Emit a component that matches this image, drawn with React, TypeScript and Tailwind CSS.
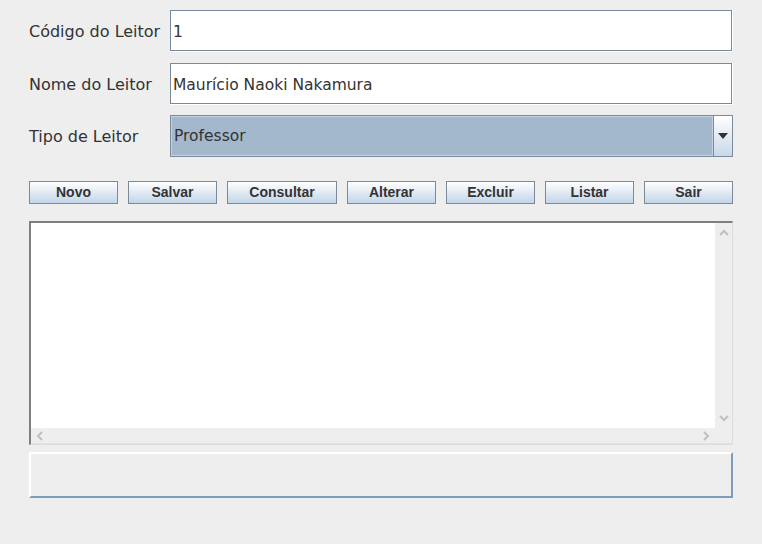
import React from 'react';

const labelFont = { fontFamily: '"DejaVu Sans", sans-serif' };

function Field({ label, value }: { label: string; value: string }) {
  return (
    <div className="flex items-center h-[42px]">
      <span className="w-[141px] text-[16px] text-[#333333] pt-[1px]">{label}</span>
      <div className="w-[563px] h-full border-r border-b border-white">
        <div className="h-full border border-[#7a8a99] bg-white flex items-center pl-[2px] pt-[4px] text-[15.5px] text-[#333333]">
          {value}
        </div>
      </div>
    </div>
  );
}

const buttons = [
  { text: 'Novo', w: 'w-[89px]' },
  { text: 'Salvar', w: 'w-[89px]' },
  { text: 'Consultar', w: 'w-[110px]' },
  { text: 'Alterar', w: 'w-[89px]' },
  { text: 'Excluir', w: 'w-[89px]' },
  { text: 'Listar', w: 'w-[89px]' },
  { text: 'Sair', w: 'w-[89px]' },
];

export default function App() {
  return (
    <div className="w-[762px] h-[544px] bg-[#eeeeee] pt-[10px] pl-[29px]" style={labelFont}>
      {/* form rows */}
      <div className="flex flex-col">
        <Field label="Código do Leitor" value="1" />
        <div className="mt-[11px]">
          <Field label="Nome do Leitor" value="Maurício Naoki Nakamura" />
        </div>
        <div className="flex items-center h-[42px] mt-[10px]">
          <span className="w-[141px] text-[16px] text-[#333333] pt-[1px]">Tipo de Leitor</span>
          <div className="w-[563px] h-full border border-[#7a8a99] flex">
            <div className="flex-1 bg-[#a3b8cc] border border-[#c4d2df] flex items-center pl-[2px] pt-[2px] text-[15.5px] text-[#333333]">
              Professor
            </div>
            <div className="w-[19px] border-l border-[#7a8a99] bg-gradient-to-b from-white to-[#c8d8e8] flex items-center justify-center">
              <svg width="10" height="6" viewBox="0 0 10 6">
                <path d="M0 0H10L5 6Z" fill="#333333" />
              </svg>
            </div>
          </div>
        </div>
      </div>

      {/* action buttons */}
      <div className="flex gap-[10px] mt-[24px]">
        {buttons.map((b) => (
          <div
            key={b.text}
            className={`${b.w} h-[23px] border border-[#7a8a99] bg-gradient-to-b from-white to-[#c3d5e8] flex items-center justify-center text-[14px] font-bold text-[#333333]`}
            style={{ fontFamily: '"Liberation Sans", Arial, sans-serif' }}
          >
            {b.text}
          </div>
        ))}
      </div>

      {/* scroll pane */}
      <div className="w-[704px] h-[224px] mt-[17px] border-t-2 border-l-2 border-[#7f7f7f] border-r border-b border-r-[#dcdcdc] border-b-[#dcdcdc] flex flex-col">
        <div className="flex flex-1">
          <div className="flex-1 bg-white" />
          <div className="w-[17px] bg-[#eeeeee] flex flex-col items-center justify-between py-[6px]">
            <svg width="10" height="7" viewBox="0 0 10 7">
              <path d="M1 6L5 2L9 6" stroke="#c0c0c0" strokeWidth="2" fill="none" />
            </svg>
            <svg width="10" height="7" viewBox="0 0 10 7">
              <path d="M1 1L5 5L9 1" stroke="#c0c0c0" strokeWidth="2" fill="none" />
            </svg>
          </div>
        </div>
        <div className="h-[16px] flex bg-[#eeeeee] border-b border-[#e2e2e2]">
          <div className="flex-1 flex items-center justify-between px-[5px]">
            <svg width="7" height="10" viewBox="0 0 7 10">
              <path d="M6 1L2 5L6 9" stroke="#c0c0c0" strokeWidth="2" fill="none" />
            </svg>
            <svg width="7" height="10" viewBox="0 0 7 10">
              <path d="M1 1L5 5L1 9" stroke="#c0c0c0" strokeWidth="2" fill="none" />
            </svg>
          </div>
          <div className="w-[17px]" />
        </div>
      </div>

      {/* status panel */}
      <div className="w-[704px] h-[46px] mt-[7px] border-t-2 border-l-2 border-white border-b-2 border-r-2 border-b-[#7c9cbc] border-r-[#7c9cbc] bg-[#eeeeee]" />
    </div>
  );
}
